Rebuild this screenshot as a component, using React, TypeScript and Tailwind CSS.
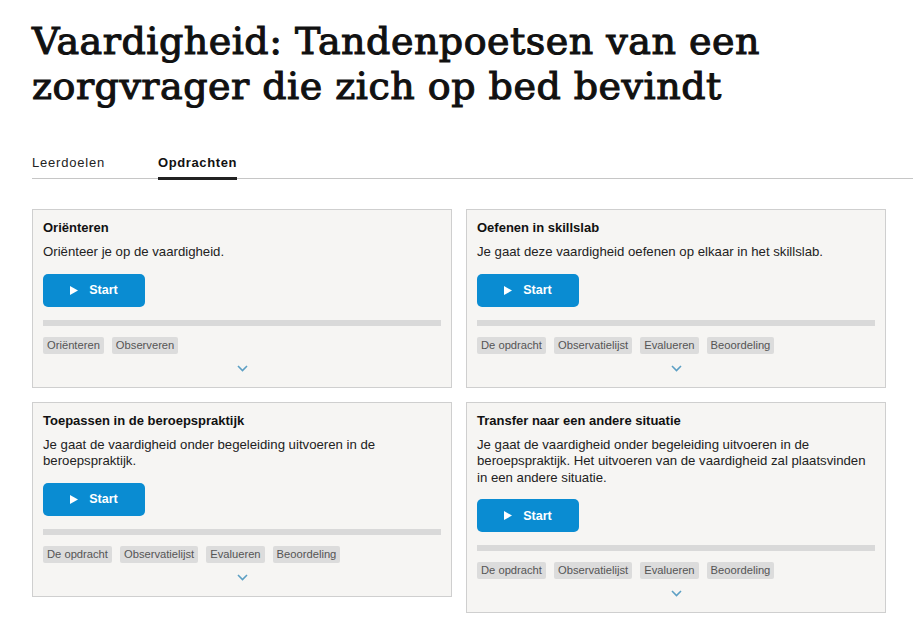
import React from 'react';

interface Opdracht {
  title: string;
  description: string;
  tags: string[];
}

const opdrachten: Opdracht[] = [
  {
    title: 'Oriënteren',
    description: 'Oriënteer je op de vaardigheid.',
    tags: ['Oriënteren', 'Observeren'],
  },
  {
    title: 'Oefenen in skillslab',
    description: 'Je gaat deze vaardigheid oefenen op elkaar in het skillslab.',
    tags: ['De opdracht', 'Observatielijst', 'Evalueren', 'Beoordeling'],
  },
  {
    title: 'Toepassen in de beroepspraktijk',
    description: 'Je gaat de vaardigheid onder begeleiding uitvoeren in de beroepspraktijk.',
    tags: ['De opdracht', 'Observatielijst', 'Evalueren', 'Beoordeling'],
  },
  {
    title: 'Transfer naar een andere situatie',
    description:
      'Je gaat de vaardigheid onder begeleiding uitvoeren in de beroepspraktijk. Het uitvoeren van de vaardigheid zal plaatsvinden in een andere situatie.',
    tags: ['De opdracht', 'Observatielijst', 'Evalueren', 'Beoordeling'],
  },
];

function OpdrachtCard({ opdracht }: { opdracht: Opdracht }) {
  return (
    <div className="border border-[#cfcfcf] bg-[#f6f5f3] px-[10px] pt-[9px] pb-[15px]">
      <h3 className="text-[13px] leading-[18px] font-bold text-[#111]">{opdracht.title}</h3>
      <p className="mt-[7px] text-[13.2px] leading-[16.6px] text-[#222]">{opdracht.description}</p>

      {/* Start button */}
      <button className="mt-[13px] flex h-[33px] w-[102px] items-center justify-center gap-[11px] rounded-[5px] bg-[#0a8cd2] text-white">
        <svg width="8" height="9" viewBox="0 0 8 9">
          <path d="M0 0 L8 4.5 L0 9 Z" fill="white" />
        </svg>
        <span className="text-[12.5px] font-bold">Start</span>
      </button>

      {/* Progress */}
      <div className="mt-[13px] h-[6px] w-full bg-[#d9d9d9]" />

      <div className="mt-[11px] flex flex-wrap gap-[8px]">
        {opdracht.tags.map((tag) => (
          <span key={tag} className="rounded-[2px] bg-[#dcdcdc] px-[4px] text-[11.2px] leading-[17px] text-[#555]">
            {tag}
          </span>
        ))}
      </div>

      <div className="mt-[11px] flex justify-center">
        <svg width="11" height="7" viewBox="0 0 11 7">
          <path d="M1 1 L5.5 5.5 L10 1" fill="none" stroke="#5c9fc4" strokeWidth="1.6" />
        </svg>
      </div>
    </div>
  );
}

export default function App() {
  return (
    <div className="min-h-screen bg-white pl-[32px] pt-[19px] font-['Liberation_Sans',Arial,sans-serif]">
      <h1 className="font-['DejaVu_Serif',serif] text-[38px] leading-[45px] tracking-[0.5px] text-[#111] [-webkit-text-stroke:1.1px_#111]">
        Vaardigheid: Tandenpoetsen van een
        <br />
        zorgvrager die zich op bed bevindt
      </h1>

      {/* Tabs */}
      <div className="mt-[45px] flex gap-[53px] border-b border-[#c6c6c6]">
        <div className="pb-[6px] text-[13px] leading-[18px] tracking-[0.8px] text-[#222]">Leerdoelen</div>
        <div className="-mb-[2px] border-b-[3px] border-[#222] pb-[5px] text-[13px] leading-[18px] font-bold tracking-[0.6px] text-[#111]">
          Opdrachten
        </div>
      </div>

      <div className="mt-[30px] grid w-[854px] grid-cols-2 items-start gap-[14px]">
        {opdrachten.map((o) => (
          <OpdrachtCard key={o.title} opdracht={o} />
        ))}
      </div>
    </div>
  );
}
